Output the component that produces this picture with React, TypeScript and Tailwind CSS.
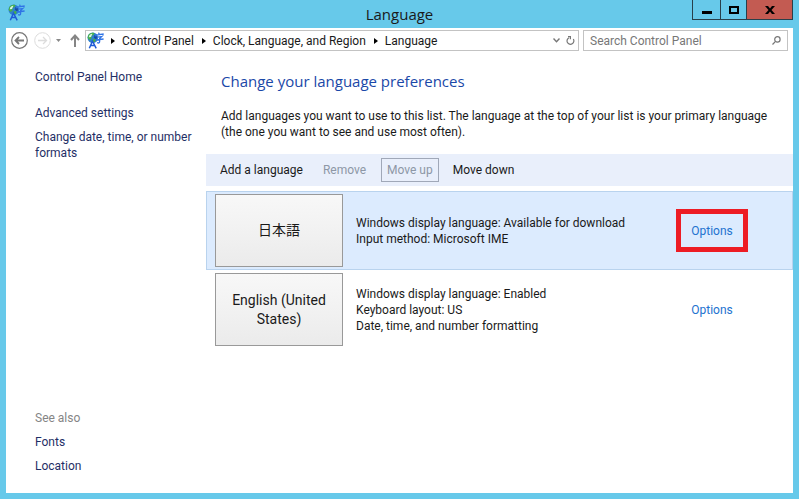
const breadcrumbs = ['Control Panel', 'Clock, Language, and Region', 'Language']

const languages = [
  {
    name: '日本語',
    details: ['Windows display language: Available for download', 'Input method: Microsoft IME'],
    selected: true
  },
  {
    name: 'English (United States)',
    details: ['Windows display language: Enabled', 'Keyboard layout: US', 'Date, time, and number formatting'],
    selected: false
  }
]

function LanguageIcon() {
  return (
    <svg viewBox="0 0 17 17" className="h-[17px] w-[17px] shrink-0" aria-hidden="true">
      <circle cx="5.8" cy="5.8" r="5.3" fill="#2f80cc" />
      <path d="M1.2 3.5C2 1.5 5 .2 7.5 1.2L6.5 3 4.5 4 4.5 6.5 2.5 8 .6 6ZM5.5 7.5L8 7 9 8.5 7 10.5 5.5 10Z" fill="#46b04a" />
      <path d="M1.8 5.2C1.8 3.2 3.6 1.8 5.4 1.8L4 5Z" fill="#d8f2e4" />
      <path d="M7.5 3L10 4.5 9.5 7.5 7 6Z" fill="#154a9e" />
      <path d="M2.3 16.3L5.5 9.2 9.2 16.3M3.8 13.6H7.8" fill="none" stroke="#1f5bd6" strokeWidth="1.5" />
      <path
        d="M11.6 .6L12.2 2.4M8.6 4.4L9 3 16 2V3.6M10 5.2L14.6 4.6 12.6 6.6V9.8C12.6 11.2 11.4 11.2 10 10.6M8.6 8L16.6 7"
        fill="none"
        stroke="#2f74e6"
        strokeWidth="1.3"
      />
    </svg>
  )
}

function TitleBar() {
  return (
    <header className="grid h-7 grid-cols-[1fr_auto_1fr] items-start">
      <div className="pl-[2px] pt-1">
        <LanguageIcon />
      </div>
      <h1 className="font-['Open_Sans',sans-serif] text-[15px] leading-7">Language</h1>
      <div className="flex h-5 justify-self-end border border-t-0 border-[#28404b]">
        <button aria-label="Minimize" className="flex w-[27px] items-center justify-center">
          <svg viewBox="0 0 10 10" className="h-[10px] w-[10px]">
            <path d="M0 7.5H10" stroke="#000" strokeWidth="3" />
          </svg>
        </button>
        <button aria-label="Maximize" className="flex w-[26px] items-center justify-center border-l border-[#28404b]">
          <svg viewBox="0 0 10 8" className="h-2 w-[10px]">
            <path d="M1 1H9V7H1Z" fill="none" stroke="#000" strokeWidth="2" />
          </svg>
        </button>
        <button aria-label="Close" className="flex w-[46px] items-center justify-center border-l border-[#28404b] bg-[#c35b52]">
          <svg viewBox="0 0 10 8" className="h-2 w-[10px]">
            <path d="M0 0H3L5 2.5 7 0H10L6.5 4 10 8H7L5 5.5 3 8H0L3.5 4Z" fill="#000" />
          </svg>
        </button>
      </div>
    </header>
  )
}

function AddressBar() {
  return (
    <nav className="flex h-6 items-center pl-[5px] pr-[5px] pt-px">
      <button aria-label="Back">
        <svg viewBox="0 0 17 17" className="h-[17px] w-[17px]" fill="none" stroke="#777">
          <circle cx="8.5" cy="8.5" r="7.8" strokeWidth="1.2" />
          <path d="M13 8.5H5M8 5L4.5 8.5 8 12" strokeWidth="1.8" />
        </svg>
      </button>
      <button aria-label="Forward" disabled className="ml-[6px]">
        <svg viewBox="0 0 17 17" className="h-[17px] w-[17px]" fill="none" stroke="#dcdcdc">
          <circle cx="8.5" cy="8.5" r="7.8" />
          <path d="M4 8.5H12M9 5L12.5 8.5 9 12" strokeWidth="1.3" />
        </svg>
      </button>
      <button aria-label="Recent locations" className="ml-[5px]">
        <svg viewBox="0 0 5 3" className="h-[3px] w-[5px]">
          <path d="M0 0H5L2.5 3Z" fill="#888" />
        </svg>
      </button>
      <button aria-label="Up one level" className="ml-[9px]">
        <svg viewBox="0 0 10 13" className="h-[13px] w-[10px]" fill="none" stroke="#858585" strokeWidth="2">
          <path d="M5 13V2M1 6L5 1.5 9 6" />
        </svg>
      </button>
      <div className="ml-[5px] flex h-[21px] min-w-0 flex-1 items-center border border-[#c3c3c3] pl-px pr-[3px]">
        <LanguageIcon />
        <ol className="flex flex-1 items-center whitespace-nowrap pl-[7px]">
          {breadcrumbs.map((crumb) => (
            <li key={crumb} className="flex items-center pr-2">
              <svg viewBox="0 0 4 6" className="mr-[7px] h-[6px] w-1" aria-hidden="true">
                <path d="M0 0L4 3 0 6Z" fill="#000" />
              </svg>
              <a href="#">{crumb}</a>
            </li>
          ))}
        </ol>
        <button aria-label="Previous locations">
          <svg viewBox="0 0 7 5" className="h-[5px] w-[7px]" fill="none" stroke="#777" strokeWidth="1.4">
            <path d="M.5 .5L3.5 3.8 6.5 .5" />
          </svg>
        </button>
        <button aria-label="Refresh" className="ml-[6px]">
          <svg viewBox="0 0 9 9" className="h-[9px] w-[9px]" fill="none" stroke="#777" strokeWidth="1.2">
            <path d="M7.3 3A3.4 3.4 0 1 1 3 1.8" />
            <path d="M2 .7H4.4V3.2" />
          </svg>
        </button>
      </div>
      <label className="ml-1 flex h-[21px] w-[205px] items-center border border-[#c3c3c3] px-[6px]">
        <input
          type="text"
          aria-label="Search Control Panel"
          placeholder="Search Control Panel"
          className="min-w-0 flex-1 leading-4 outline-none placeholder:text-[#777]"
        />
        <svg viewBox="0 0 9 9" className="h-[9px] w-[9px]" fill="none" stroke="#777" strokeWidth="1.2">
          <circle cx="5.4" cy="3.4" r="2.7" />
          <path d="M3.5 5.3L.5 8.5" />
        </svg>
      </label>
    </nav>
  )
}

function Sidebar() {
  return (
    <aside className="flex w-[200px] shrink-0 flex-col items-start gap-2 pb-[19px] pl-[29px] pr-1 pt-[17px] text-[#1f2f66]">
      <a href="#" className="mb-3">Control Panel Home</a>
      <a href="#">Advanced settings</a>
      <a href="#">Change date, time, or number formats</a>
      <span className="mt-auto text-[#858585]">See also</span>
      <a href="#">Fonts</a>
      <a href="#">Location</a>
    </aside>
  )
}

export default function App() {
  return (
    <div className="flex min-h-screen flex-col bg-[#67c9ea] px-[6px] pb-[6px] font-[Roboto,'Noto_Sans_CJK_JP',sans-serif] text-[12px] leading-4 text-[#1a1a1a]">
      <TitleBar />
      <div className="flex flex-1 flex-col bg-white">
        <AddressBar />
        <div className="flex flex-1">
          <Sidebar />
          <main className="min-w-0 flex-1 pt-[17px]">
            <h2 className="pl-[15px] font-['Open_Sans',sans-serif] text-[15px] leading-6 text-[#1a48a8]">
              Change your language preferences
            </h2>
            <p className="mt-[15px] pl-[15px] pr-2">
              Add languages you want to use to this list. The language at the top of your list is your primary language
              (the one you want to see and use most often).
            </p>

            {/* Commands */}
            <div className="mt-[14px] flex h-8 items-center bg-[#e9effb] pl-[14px]">
              <button>Add a language</button>
              <button disabled className="ml-5 text-[#8d97a6]">Remove</button>
              <button disabled className="ml-[15px] border border-[#a0a8b8] px-[5px] py-[3px] text-[#8d97a6]">Move up</button>
              <button className="ml-[14px]">Move down</button>
            </div>

            {/* Installed languages */}
            <ul className="mt-[5px]">
              {languages.map((language) => (
                <li
                  key={language.name}
                  className={`flex h-[79px] items-center border pl-2 ${
                    language.selected ? 'border-[#b9d3ee] bg-[#dcebfe]' : 'border-transparent'
                  }`}
                >
                  <div className="flex h-[73px] w-32 shrink-0 items-center justify-center border border-[#999] bg-linear-to-b from-[#f8f8f8] to-[#ebebeb] px-3 text-center text-[14px] leading-[19px]">
                    {language.name}
                  </div>
                  <div className="ml-[13px] flex-1">
                    {language.details.map((detail) => (
                      <p key={detail}>{detail}</p>
                    ))}
                  </div>
                  <div
                    className={`mr-11 flex h-[43px] w-[72px] items-center justify-center ${
                      language.selected ? 'border-5 border-[#ed1c24]' : ''
                    }`}
                  >
                    <a href="#" className="text-[#2372cf]">Options</a>
                  </div>
                </li>
              ))}
            </ul>
          </main>
        </div>
      </div>
    </div>
  )
}
